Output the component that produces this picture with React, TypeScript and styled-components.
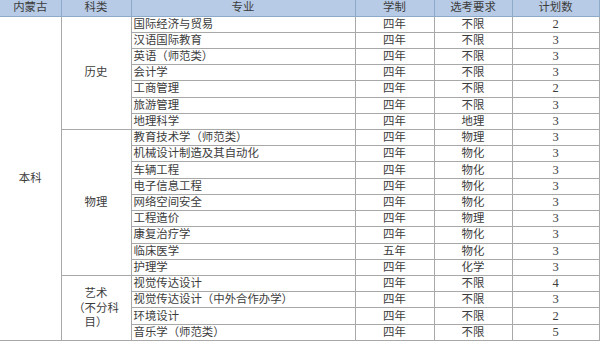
import React from "react";
import styled, { createGlobalStyle } from "styled-components";

type Row = { major: string; years: string; req: string; count: number };

const history: Row[] = [
  { major: "国际经济与贸易", years: "四年", req: "不限", count: 2 },
  { major: "汉语国际教育", years: "四年", req: "不限", count: 3 },
  { major: "英语（师范类）", years: "四年", req: "不限", count: 3 },
  { major: "会计学", years: "四年", req: "不限", count: 3 },
  { major: "工商管理", years: "四年", req: "不限", count: 2 },
  { major: "旅游管理", years: "四年", req: "不限", count: 3 },
  { major: "地理科学", years: "四年", req: "地理", count: 3 },
];

const physics: Row[] = [
  { major: "教育技术学（师范类）", years: "四年", req: "物理", count: 3 },
  { major: "机械设计制造及其自动化", years: "四年", req: "物化", count: 3 },
  { major: "车辆工程", years: "四年", req: "物化", count: 3 },
  { major: "电子信息工程", years: "四年", req: "物化", count: 3 },
  { major: "网络空间安全", years: "四年", req: "物化", count: 3 },
  { major: "工程造价", years: "四年", req: "物理", count: 3 },
  { major: "康复治疗学", years: "四年", req: "物化", count: 3 },
  { major: "临床医学", years: "五年", req: "物化", count: 3 },
  { major: "护理学", years: "四年", req: "化学", count: 3 },
];

const art: Row[] = [
  { major: "视觉传达设计", years: "四年", req: "不限", count: 4 },
  { major: "视觉传达设计（中外合作办学）", years: "四年", req: "不限", count: 3 },
  { major: "环境设计", years: "四年", req: "不限", count: 2 },
  { major: "音乐学（师范类）", years: "四年", req: "不限", count: 5 },
];

const groups: { name: React.ReactNode; rows: Row[] }[] = [
  { name: "历史", rows: history },
  { name: "物理", rows: physics },
  {
    name: (
      <>
        艺术
        <br />
        （不分科
        <br />
        目）
      </>
    ),
    rows: art,
  },
];

const total = groups.reduce((n, g) => n + g.rows.length, 0);

const App = () => {
  return (
    <>
      <GlobalStyle />
      <Table>
        <colgroup>
          <col style={{ width: 61 }} />
          <col style={{ width: 70 }} />
          <col style={{ width: 224 }} />
          <col style={{ width: 79 }} />
          <col style={{ width: 78 }} />
          <col style={{ width: 87 }} />
        </colgroup>
        <thead>
          <HeadRow>
            <Th>内蒙古</Th>
            <Th>科类</Th>
            <Th>专业</Th>
            <Th>学制</Th>
            <Th>选考要求</Th>
            <Th>计划数</Th>
          </HeadRow>
        </thead>
        <tbody>
          {groups.map((g, gi) =>
            g.rows.map((r, ri) => (
              <BodyRow key={`${gi}-${ri}`}>
                {gi === 0 && ri === 0 && (
                  <Merged rowSpan={total}>本科</Merged>
                )}
                {ri === 0 && (
                  <Merged rowSpan={g.rows.length} $tight={gi === 2}>
                    {g.name}
                  </Merged>
                )}
                <Major>{r.major}</Major>
                <Td>{r.years}</Td>
                <Td>{r.req}</Td>
                <Count>{r.count}</Count>
              </BodyRow>
            ))
          )}
        </tbody>
      </Table>
    </>
  );
};

export default App;

const GlobalStyle = createGlobalStyle`
  html, body {
    margin: 0;
    padding: 0;
    background: #ffffff;
  }
  body {
    width: 600px;
    height: 343px;
    overflow: hidden;
    font-family: "Liberation Serif", "Noto Sans CJK SC", serif;
    color: #3a3a3a;
  }
`;

const Table = styled.table`
  width: 599px;
  height: 341px;
  table-layout: fixed;
  border-collapse: collapse;
  font-size: 11.4px;
  font-family: "Liberation Serif", "Noto Sans CJK SC", serif;
  color: #3c3c3c;
`;

const HeadRow = styled.tr`
  height: 16px;
  background: #b7cbe6;
`;

const Th = styled.th`
  padding: 0;
  font-weight: normal;
  text-align: center;
  line-height: 15px;
  border-left: 1px solid #8eaacb;
  border-bottom: 1px solid #8eaacb;

  &:first-child {
    border-left: none;
  }
  &:last-child {
    border-right: 1px solid #8eaacb;
  }
`;

const BodyRow = styled.tr``;

const Td = styled.td`
  padding: 0;
  text-align: center;
  line-height: 15px;
  white-space: nowrap;
  border: 1px solid #a8a8a8;
`;

const Major = styled(Td)`
  text-align: left;
  padding-left: 2px;
`;

const Count = styled(Td)`
  font-size: 12.5px;
`;

const Merged = styled.td<{ $tight?: boolean }>`
  padding: 0;
  text-align: center;
  vertical-align: middle;
  line-height: ${(p) => (p.$tight ? "14.5px" : "15px")};
  border: 1px solid #a8a8a8;

  &:first-child {
    border-left: none;
  }
`;
